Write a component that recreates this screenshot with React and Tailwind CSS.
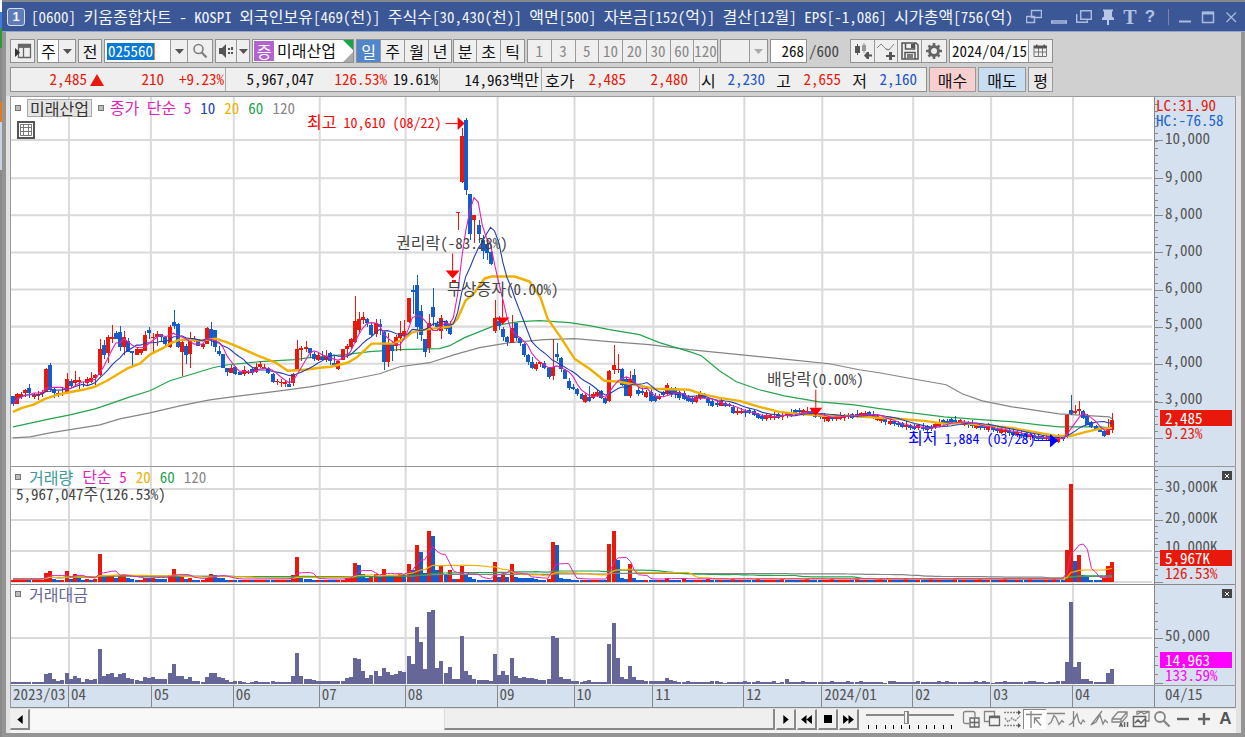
import React from 'react';

/* ---------- price data: [colour, high, body top, body bottom, low] in chart units ---------- */
const HEAD = `b395,395,403,405 r392,393,403,403 r391,393,396,398 r388,389,392,396 b383,387,392,397 r392,394,396,398 r390,393,395,399 r389,391,393,396 r367,368,391,391 b362,364,389,391
b387,388,392,397 r390,392,394,396 r387,392,393,395 r372,378,392,393 b378,380,385,387 r370,379,382,385 r376,379,381,388 b381,383,384,386 r376,378,382,384 r371,377,381,382
r373,374,377,384 r338,348,374,375 b339,344,354,358 r334,336,352,362 r324,336,338,342 b330,332,338,338 b325,331,346,350 r330,336,346,354 b337,340,351,351 b350,350,352,366
r346,348,354,354 r348,348,352,354 r330,334,350,350 b326,329,332,338 r332,336,337,352 r330,333,336,345 b333,333,336,341 b335,336,343,346 r324,326,346,347 b309,321,325,328
b322,323,346,347 r340,341,351,375 b343,345,354,363 r331,338,353,367 r335,338,340,341 b338,338,345,345 r342,343,346,348 r326,327,343,343 b321,328,339,345 b329,329,346,351
b345,350,353,355 b353,353,367,367 b367,367,371,375 r364,367,372,372 b365,366,373,374 b371,371,374,374 r365,369,373,375 r369,371,372,373 b366,368,372,374 r362,366,371,372
r360,363,366,367 r363,366,368,368 b366,367,372,373 b372,373,381,382 r378,380,381,384 r378,381,382,386 r379,381,383,386 b377,383,386,386 r372,373,382,385 r339,348,370,370
r345,347,349,360 r340,346,348,351 b347,347,352,357 b351,353,358,360 r352,354,359,360 b350,356,359,360 r349,355,359,361 b351,352,360,364 b355,362,364,365 r360,360,368,369
r348,348,359,359 r343,345,348,357 r337,338,346,348 r295,320,341,342 r311,318,329,333 r311,316,319,323 b317,318,322,326 b322,324,334,336 r318,322,333,336 b318,323,326,334
b330,331,361,369 r332,343,361,366 b341,343,350,360 r334,336,345,350 r320,332,337,350 r319,330,335,336 r297,297,321,322 b284,289,291,313 b275,284,326,338 b304,310,334,340
b338,338,351,356 r313,322,347,352 b287,306,316,325 b320,323,326,330 r314,317,330,338 b319,320,328,330 b320,323,333,334 r280,280,281,282 r212,212,213,230 r128,136,182,183
b118,120,190,195 b194,194,234,240 r215,215,220,243 b220,225,234,243 b235,240,251,259 b240,244,253,260 b251,252,264,265 r299,317,330,332 b315,320,325,329 b326,328,336,340
b335,336,341,345 r314,327,342,342 b322,322,337,340 b336,337,342,345 b342,343,354,356 b353,354,361,364 b356,361,367,368 r361,363,368,370 r361,361,363,366 b360,362,367,368
b367,367,376,378 r338,366,375,379 b342,353,356,360 b356,357,368,371 b368,369,378,378 b377,380,387,389 b383,386,388,389 b387,388,393,395 b392,393,398,399 r392,394,401,402
b385,396,400,401 r391,393,397,398 r389,391,395,396 b389,390,397,398 b396,397,402,403 r369,370,400,401 r344,364,369,373 r353,368,369,372 b367,368,384,385 b376,378,395,395
r370,378,395,397 b368,374,383,385 b386,389,393,395 b385,390,392,394 r389,391,396,397 b387,391,400,401 b392,395,400,401 r393,395,398,399 b390,391,394,396 r382,384,393,394
b386,388,394,396 b386,387,393,397 b389,391,397,399 b390,392,398,399 b394,396,400,401 b395,397,401,403 r394,396,401,402 r390,392,397,399 b392,393,397,398 b396,397,402,405
b398,400,405,406 b399,402,404,406 r397,400,405,405 b401,402,405,406 b402,403,405,406 b404,406,412,413 r407,410,412,414 r407,410,412,413 b408,410,412,416 b408,409,412,413
b409,410,414,415 b412,413,417,418 b413,415,418,420 r412,414,418,420`;
const TAIL = `b436,438,440,441 r433,435,441,442 b436,436,438,440 r413,414,436,437 b394,409,413,414 r404,410,412,413 r400,408,410,414 b409,410,417,418 b413,415,424,424 b420,421,426,427
b424,425,428,429 b426,427,431,431 b429,430,435,436 r418,427,434,434 r412,419,429,432`;
const parse = (s) => s.trim().split(/\s+/).map((t) => [t[0], ...t.slice(1).split(',').map(Number)]);

/* the quiet stretch between the two listed runs, as [bar, level] */
const DRIFT = [[184, 416], [188, 414], [191, 410], [194, 412], [198, 418], [203, 415], [208, 413], [211, 419], [218, 426], [223, 427], [226, 421], [229, 420], [233, 424], [238, 428], [243, 432], [248, 436], [253, 438]];
const QUIET_COLORS = 'rrbrrbbbrrbbbrrbrrrrbbrrbbrrbrbbbrbbrbbbrrbbbbrrbbrbbrbbrrbbrbbrbbbrb';
const LAST = 267;
const head = parse(HEAD);
const tail = parse(TAIL);
const quiet = [];
for (let i = head.length; i <= LAST - tail.length; i++) {
  let k = 1;
  while (k < DRIFT.length - 1 && i > DRIFT[k][0]) k++;
  const [a, ya] = DRIFT[k - 1];
  const [b, yb] = DRIFT[k];
  const y = Math.round(ya + ((yb - ya) * (i - a)) / (b - a));
  const c = QUIET_COLORS[(i - head.length) % QUIET_COLORS.length];
  const big = i % 3 === 0 ? 1 : 0;
  quiet.push([c, y - 3 - (i % 4 === 1 ? 2 : 0), y - 2 + (i % 2), y + 1 + big, y + 3 + (i % 5 === 2 ? 1 : 0)]);
}
const CANDLES = [...head, ...quiet, ...tail];
const xOf = (i) => 13 + i * 4.12;
const RED = '#e8190b';
const BLUE = '#145bcb';

/* ---------- traded amount and volume, as bar heights ---------- */
const AMOUNT_HEAD = [2, 2, 2, 2, 2, 2, 2, 2, 10, 11, 5, 3, 4, 11, 5, 8, 6, 2, 5, 4, 5, 35, 8, 10, 11, 7, 10, 11, 6, 5, 4, 3, 7, 6, 7, 5, 5, 5, 11, 20, 8, 8, 5, 7, 3, 3, 2, 7, 11, 11, 7, 6, 4, 2, 3, 3, 2, 1, 2, 3, 2, 2, 2, 3, 2, 2, 2, 2, 8, 31, 8, 5, 5, 4, 3, 3, 3, 3, 3, 3, 3, 6, 7, 26, 25, 13, 6, 9, 13, 8, 16, 12, 9, 10, 13, 12, 28, 20, 57, 42, 15, 72, 74, 16, 23, 11, 17, 5, 5, 48, 13, 9, 5, 4, 4, 4, 3, 30, 9, 13, 9, 26, 8, 6, 7, 6, 6, 5, 4, 4, 5, 48, 46, 7, 5, 5, 3, 3, 2, 3, 4, 2, 2, 2, 2, 40, 61, 26, 7, 5, 18, 7, 4, 4, 3, 3, 3, 3, 3, 6, 4, 3];
const AMOUNT_TAIL = [3, 3, 22, 82, 17, 22, 5, 5, 3, 2, 2, 2, 11, 15];
const AMOUNT = CANDLES.map((_, i) => {
  if (i < AMOUNT_HEAD.length) return AMOUNT_HEAD[i];
  if (i >= 254) return AMOUNT_TAIL[i - 254];
  if (i === 188) return 5;
  return i % 7 === 3 || i % 11 === 5 ? 3 : i % 13 === 4 ? 1 : 2;
});
const BIG_VOLUME = { 8: 9, 9: 11, 13: 11, 15: 8, 21: 28, 39: 13, 48: 8, 68: 7, 69: 25, 83: 19, 84: 17, 90: 13, 96: 18, 98: 37, 99: 30, 101: 51, 102: 46, 103: 12, 104: 17, 106: 12, 109: 16, 117: 20, 121: 18, 131: 40, 132: 37, 145: 38, 146: 51, 147: 22, 150: 18, 256: 32, 257: 98, 258: 21, 259: 27, 260: 7, 261: 6, 265: 4, 266: 16, 267: 20 };
const VOLUME = AMOUNT.map((a, i) => {
  if (BIG_VOLUME[i]) return BIG_VOLUME[i];
  if (i > 160) return i % 6 === 1 ? 3 : 2;
  return Math.max(2, Math.round(a * 0.6));
});
/* a volume bar is red when it rose against the bar before it */
const volumeColor = (i) => {
  const change = VOLUME[i] - (VOLUME[i - 1] ?? 0);
  if (change === 0) return CANDLES[i][0] === 'r' ? RED : BLUE;
  return change > 0 ? RED : BLUE;
};

const movingAverage = (values, n) => values.map((_, i) => {
  const part = values.slice(Math.max(0, i - n + 1), i + 1);
  return part.reduce((s, v) => s + v, 0) / part.length;
});
const CLOSES = CANDLES.map(([c, , top, bottom]) => (c === 'r' ? top : bottom));
const toPoints = (ys) => ys.map((y, i) => `${xOf(i).toFixed(1)},${y.toFixed(1)}`).join(' ');
const volLine = (n) => toPoints(movingAverage(VOLUME, n).map((v) => 580 - v));

const MA20 = '13,411 22,407 33,404 45,398 57,394 67,392 83,389 95,386 107,380 117,374 127,368 140,363 150,354 162,348 170,343 180,339 200,340 216,338 228,342 240,347 258,355 276,362 288,370 305,369 320,367 331,366 348,362 358,356 372,343 385,343 394,343 405,338 412,332 425,329 450,326 458,318 466,300 475,292 485,278 492,276 515,276 530,281 541,297 548,318 560,335 575,358 590,368 605,380 620,381 640,385 655,388 690,389 702,393 720,397 740,400 760,406 780,411 800,413 825,415 850,415 880,417 900,418 925,420 947,423 963,422 980,424 1013,427 1040,432 1057,435 1072,435 1087,431 1100,428 1113,427';
const MA60 = '13,426 27,423 50,418 70,414 95,408 110,403 130,396 150,390 170,380 190,374 213,367 228,364 260,361 295,359 310,357 345,354 370,351 400,349 440,348 450,345 465,337 480,331 495,325 520,321 540,320 570,322 590,325 610,329 640,334 660,342 690,351 702,355 720,370 737,381 760,389 785,395 820,401 855,404 882,408 905,411 945,416 985,419 1015,421 1040,424 1060,426 1100,426 1113,427';
const MA120 = '13,437 30,436 50,432 75,428 100,424 120,418 150,412 180,405 210,399 240,395 280,390 310,386 345,380 380,373 400,366 430,362 455,354 480,347 510,342 545,339 575,338 610,341 650,344 690,349 740,354 790,359 830,363 860,369 880,372 913,378 947,384 963,393 983,400 1013,406 1060,413 1110,416 1113,418';

const MONTHS = [69, 151, 234, 320, 406, 498, 575, 654, 745, 823, 914, 992, 1074];
const PRICES = [140, 178, 215, 252, 289, 326, 363, 401, 437];

const FACE = "font-['Noto_Sans_Mono_CJK_KR','Noto_Sans_CJK_KR',monospace]";

/* Hangul is set one step larger than the figures beside it */
function Mixed({ children }) {
  return children.split(/([가-힣]+)/).map((run, i) => (i % 2 ? <span key={i} className="text-[16px]">{run}</span> : run));
}

function Grid({ rows, top, bottom }) {
  return (
    <g stroke="#dadada" strokeWidth="2">
      {MONTHS.map((x) => <line key={x} x1={x} x2={x} y1={top} y2={bottom} />)}
      {rows.map((y) => <line key={y} x1="11" x2="1153" y1={y} y2={y} />)}
    </g>
  );
}

function Ticks({ major, minor }) {
  return (
    <g stroke="#8a8a8a" shapeRendering="crispEdges">
      {major.map((y) => <line key={'a' + y} x1="1155" x2="1163" y1={y + 0.5} y2={y + 0.5} />)}
      {minor.map((y) => <line key={'b' + y} x1="1155" x2="1158" y1={y + 0.5} y2={y + 0.5} />)}
    </g>
  );
}
const steps = (from, to, step) => {
  const out = [];
  for (let y = from; y < to; y += step) out.push(Math.round(y));
  return out;
};

function Label({ className, children }) {
  return <span className={'absolute whitespace-nowrap leading-4 ' + className}><Mixed>{children}</Mixed></span>;
}
function Dot() {
  return <span className="size-[6px] border border-[#777] bg-[#bbb]" />;
}
function CloseBox() {
  return (
    <button aria-label="닫기" className="absolute right-[3px] top-1 flex h-[9px] w-[10px] items-center justify-center bg-[#444]">
      <svg viewBox="0 0 6 6" className="size-[6px]" stroke="#fff"><path d="M1 1l4 4M5 1L1 5" /></svg>
    </button>
  );
}

function PricePane() {
  return (
    <div className="flex min-h-[368px] flex-1 border-b border-[#999]">
      <div className="relative min-w-0 flex-1">
        <svg viewBox="11 97 1144 368" preserveAspectRatio="none" className="block h-full w-full" fill="none">
          <Grid rows={PRICES} top={97} bottom={465} />
          <polyline points={MA120} stroke="#858585" strokeWidth="1.2" />
          <polyline points={MA60} stroke="#24a44c" strokeWidth="1.2" />
          <g shapeRendering="crispEdges">
            {CANDLES.map(([c, hi, top, bottom, lo], i) => {
              const x = Math.round(xOf(i));
              const color = c === 'r' ? RED : BLUE;
              return (
                <g key={i} fill={color}>
                  <rect x={x} y={hi} width="1" height={Math.max(1, lo - hi)} />
                  <rect x={x - 2} y={top} width="4" height={Math.max(1, bottom - top)} />
                </g>
              );
            })}
          </g>
          <polyline points={MA20} stroke="#f0b000" strokeWidth="2.4" strokeLinejoin="round" />
          <polyline points={toPoints(movingAverage(CLOSES, 10))} stroke="#2440b4" strokeWidth="1.1" />
          <polyline points={toPoints(movingAverage(CLOSES, 5))} stroke="#e022b4" strokeWidth="1.1" />
          <g fill="#ff0000" stroke="#ff0000">
            <path d="M446 123.5h12" /><path d="M458 117l7 6.500-7 6.500z" stroke="none" />
            <path d="M453 253v18" /><path d="M446 270h14l-7 8z" stroke="none" />
            <path d="M503 299v18" /><path d="M496 317h14l-7 7z" stroke="none" />
            <path d="M816.500 389v18" /><path d="M810 407h13l-6.500 8z" stroke="none" />
          </g>
          <path d="M1035 439.500h18" stroke="#0000ff" /><path d="M1051 433l8 6.500-8 7z" fill="#0000ff" />
        </svg>
        <div className="absolute left-1 top-[2px] flex items-center gap-[6px] leading-4">
          <Dot />
          <span className="-my-px border border-[#aaa] bg-[#e4e4e4] px-[2px] text-[16px] text-[#333]">미래산업</span>
          <Dot />
          <span className="text-[#e01fc0]"><Mixed>종가 단순 5</Mixed></span>
          <span className="pl-[3px] text-[#2440b4]">10</span>
          <span className="pl-[3px] text-[#f0b000]">20</span>
          <span className="pl-[3px] text-[#24a44c]">60</span>
          <span className="pl-[3px] text-[#888]">120</span>
        </div>
        <button aria-label="표" className="absolute left-[6px] top-6 flex size-[18px] items-center justify-center border-2 border-[#555] bg-white">
          <svg viewBox="0 0 12 12" className="size-3" stroke="#777" fill="none"><path d="M.5.5h11v11H.5zM.5 3.500h11M.5 7.500h11M3.500.5v11M8.500.5v11" /></svg>
        </button>
        <Label className="left-[296px] top-4 text-[14px] text-[#ff0000]">최고 10,610 (08/22)</Label>
        <Label className="left-[385px] top-[137px] text-[#444]">권리락(-83.28%)</Label>
        <Label className="left-[436px] top-[183px] text-[#444]">무상증자(0.00%)</Label>
        <Label className="left-[756px] top-[273px] text-[#444]">배당락(0.00%)</Label>
        <Label className="left-[897px] top-[332px] text-[14px] text-[#0000ff]">최저 1,884 (03/28)</Label>
      </div>
      <div className="relative w-[81px] border-l border-[#888] bg-[#d6e1ef] text-[#555]">
        <svg viewBox="1155 97 80 368" preserveAspectRatio="none" className="block h-full w-full">
          <Ticks major={PRICES} minor={steps(103.500, 464, 7.420)} />
        </svg>
        <Label className="left-px top-0 text-[#e8190b]">LC:31.90</Label>
        <Label className="left-px top-[15px] text-[#1d62d2]">HC:-76.58</Label>
        <Label className="left-[10px] top-[33px]">10,000</Label>
        <Label className="left-[10px] top-[71px]">9,000</Label>
        <Label className="left-[10px] top-[108px]">8,000</Label>
        <Label className="left-[10px] top-[145px]">7,000</Label>
        <Label className="left-[10px] top-[182px]">6,000</Label>
        <Label className="left-[10px] top-[218px]">5,000</Label>
        <Label className="left-[10px] top-[256px]">4,000</Label>
        <Label className="left-[10px] top-[293px]">3,000</Label>
        <Label className="left-[5px] top-[313px] w-[72px] bg-[#e8190b] pl-[5px] text-white">2,485</Label>
        <Label className="left-[10px] top-[328px] text-[#e8190b]">9.23%</Label>
      </div>
    </div>
  );
}

function VolumePane() {
  return (
    <div className="flex h-[118px] shrink-0 border-b border-[#888]">
      <div className="relative min-w-0 flex-1">
        <svg viewBox="11 466 1144 117" preserveAspectRatio="none" className="block h-full w-full" fill="none">
          <Grid rows={[488, 519, 550, 581]} top={466} bottom={583} />
          <g shapeRendering="crispEdges">
            {VOLUME.map((v, i) => (
              <rect key={i} x={Math.round(xOf(i)) - 2} y={581 - v} width="4" height={v} fill={volumeColor(i)} />
            ))}
          </g>
          <polyline points={volLine(120)} stroke="#858585" strokeWidth="1.2" />
          <polyline points={volLine(60)} stroke="#24a44c" strokeWidth="1.2" />
          <polyline points={volLine(20)} stroke="#f0b000" strokeWidth="1.2" />
          <polyline points={volLine(5)} stroke="#e022b4" />
        </svg>
        <div className="absolute left-1 top-px flex items-center gap-[6px] leading-4">
          <Dot />
          <span className="pl-[2px] text-[16px] text-[#3d9a9a]">거래량</span>
          <span className="pl-[3px] text-[#e01fc0]"><Mixed>단순 5</Mixed></span>
          <span className="pl-[3px] text-[#f0b000]">20</span>
          <span className="pl-[3px] text-[#24a44c]">60</span>
          <span className="pl-[3px] text-[#888]">120</span>
        </div>
        <Label className="left-[5px] top-[18px] text-[#444]">5,967,047주(126.53%)</Label>
      </div>
      <div className="relative w-[81px] border-l border-[#888] bg-[#d6e1ef] text-[#555]">
        <svg viewBox="1155 466 80 117" preserveAspectRatio="none" className="block h-full w-full">
          <Ticks major={[488, 519, 550, 581]} minor={steps(469, 580, 6.200)} />
        </svg>
        <CloseBox />
        <Label className="left-[10px] top-[11px]">30,000K</Label>
        <Label className="left-[10px] top-[42px]">20,000K</Label>
        <Label className="left-[10px] top-[71px]">10,000K</Label>
        <Label className="left-[5px] top-[83px] w-[72px] bg-[#e8190b] pl-[5px] text-white">5,967K</Label>
        <Label className="left-[10px] top-[98px] text-[#e8190b]">126.53%</Label>
      </div>
    </div>
  );
}

function AmountPane() {
  return (
    <div className="flex h-[101px] shrink-0 border-b border-[#999]">
      <div className="relative min-w-0 flex-1">
        <svg viewBox="11 584 1144 100" preserveAspectRatio="none" className="block h-full w-full" fill="none">
          <Grid rows={[637]} top={584} bottom={684} />
          <g shapeRendering="crispEdges" fill="#666699">
            {AMOUNT.map((v, i) => (
              <rect key={i} x={Math.round(xOf(i)) - 2} y={683 - v} width="4" height={v} />
            ))}
          </g>
        </svg>
        <div className="absolute left-1 top-px flex items-center gap-[6px] leading-4">
          <Dot />
          <span className="pl-[2px] text-[16px] text-[#666699]">거래대금</span>
        </div>
      </div>
      <div className="relative w-[81px] border-l border-[#888] bg-[#d6e1ef] text-[#555]">
        <svg viewBox="1155 584 80 100" preserveAspectRatio="none" className="block h-full w-full">
          <Ticks major={[637, 682]} minor={[602, 611, 620, 628, 646, 655, 664, 673]} />
        </svg>
        <CloseBox />
        <Label className="left-[10px] top-[42px]">50,000</Label>
        <Label className="left-[5px] top-[67px] w-[72px] bg-[#ff00ff] pl-[5px] text-white">14,963</Label>
        <Label className="left-[10px] top-[82px] text-[#ff00ff]">133.59%</Label>
      </div>
    </div>
  );
}

function DateAxis() {
  const cell = 'min-w-0 whitespace-nowrap border-r border-[#888] pl-[2px]';
  return (
    <div className="flex h-[22px] shrink-0 border-b border-[#888] bg-[#d6e1ef] leading-4 text-[#555]">
      <div className="grid min-w-0 flex-1 grid-cols-[58fr_83fr_82fr_86fr_86fr_92fr_77fr_79fr_91fr_78fr_91fr_78fr_82fr_81fr]">
        {['2023/03', '04', '05', '06', '07', '08', '09', '10', '11', '12', '2024/01', '02', '03'].map((m) => (
          <span key={m} className={cell}>{m}</span>
        ))}
        <span className="pl-[2px]">04</span>
      </div>
      <span className="w-[81px] border-l border-[#888] pl-[10px]">04/15</span>
    </div>
  );
}

/* ---------- title bar ---------- */
function WinButton({ label, className = 'w-6', children }) {
  return (
    <button aria-label={label} className={'flex h-7 items-center justify-center ' + className}>
      <svg viewBox="0 0 16 16" className="size-4" fill="none" stroke="#a9bbe0" strokeWidth="1.500">{children}</svg>
    </button>
  );
}
function TitleBar() {
  return (
    <header className="flex h-[30px] shrink-0 items-center border-b border-[#8fa5cf] bg-[#3b5795] pl-[5px] pr-[2px] text-[#f2f5fb]">
      <span className="flex size-[18px] shrink-0 items-center justify-center rounded-[3px] border border-[#d7e0f2] bg-[#5f7cb8] font-['Liberation_Sans',sans-serif] text-[13px] font-bold leading-none">1</span>
      <h1 className="min-w-0 flex-1 whitespace-nowrap pl-[6px] leading-6">
        <Mixed>[0600] 키움종합차트 - KOSPI 외국인보유[469(천)] 주식수[30,430(천)] 액면[500] 자본금[152(억)] 결산[12월] EPS[-1,086] 시가총액[756(억)</Mixed>
      </h1>
      <div className="flex shrink-0 items-center">
        <WinButton label="창 연결"><path d="M5.500 1.500h10v7h-10zM.5 7.500h8v6h-8z" /></WinButton>
        <WinButton label="접기" className="w-[26px]"><path d="M.7 12h14.600v2H.7z" /></WinButton>
        <WinButton label="창 복사"><path d="M4.700 1.700h10.600v8.600H4.700zM.7 5v8.300h10.600v-2" /></WinButton>
        <WinButton label="고정"><path d="M3 .5h10v1.500l-1 .5v5l2 1.500v2H2V9l2-1.500v-5l-1-.5z" fill="#b9c8e6" stroke="none" /><path d="M8 10v6" strokeWidth="2" stroke="#b9c8e6" /></WinButton>
        <button aria-label="글꼴" className="w-5 font-['Liberation_Serif',serif] text-[20px] font-bold leading-6 text-[#b3c2e2]">T</button>
        <button aria-label="도움말" className="w-5 font-['Liberation_Sans',sans-serif] text-[17px] font-bold leading-6 text-[#b3c2e2]">?</button>
        <span className="ml-[8px] mr-1 h-4 w-px bg-[#8a7fa8]" />
        <WinButton label="최소화" className="w-[24px]"><path d="M2 12.500h12" strokeWidth="2" /></WinButton>
        <WinButton label="최대화" className="w-[22px]"><path d="M2.500 3.500h11v10h-11z" /><path d="M2 4h12" strokeWidth="3" /></WinButton>
        <WinButton label="닫기"><path d="M3.500 3.500l9.500 9.500M13 3.500L3.500 13" strokeWidth="1.200" /></WinButton>
      </div>
    </header>
  );
}

/* ---------- toolbar ---------- */
const FRAME = 'flex h-6 shrink-0 border border-[#909090] divide-x divide-[#999]';
function Tool({ className = 'w-6', children, ...rest }) {
  return <button className={'flex items-center justify-center ' + className} {...rest}>{children}</button>;
}
function Caret({ color = '#555', label, className = 'w-[17px]', ...rest }) {
  return (
    <button aria-label={label} className={'flex items-center justify-center ' + className} {...rest}>
      <svg viewBox="0 0 9 5" className="h-[5px] w-[9px]" fill={color}><path d="M0 0h9L4.500 5z" /></svg>
    </button>
  );
}
function Toolbar() {
  return (
    <div className="flex items-center gap-[2px] text-[#111]">
      <div className={FRAME + ' bg-[#efefef]'}>
        <Tool aria-label="패널 열기" className="w-[23px]">
          <svg viewBox="0 0 18 16" className="h-4 w-[18px]" fill="none" stroke="#666"><path d="M4.500 1.500h12v13h-12zM4.500 4h12M9.500 4v10" strokeWidth="1.300" /><path d="M5 1.500h11v2.500H5z" fill="#666" /><path d="M1 5l5 4.500L1 14z" fill="#333" stroke="none" /></svg>
        </Tool>
      </div>
      <div className={FRAME + ' bg-[#efefef]'}>
        <select aria-label="구분" className="w-[21px] appearance-none bg-white pl-[3px] text-[16px] leading-5"><option>주</option></select>
        <Caret label="구분 열기" className="w-[16px]" />
      </div>
      <div className={FRAME + ' bg-[#efefef]'}><Tool className="w-[22px] text-[16px]">전</Tool></div>
      <div className={FRAME + ' bg-[#efefef]'}>
        <span className="flex w-[66px] items-center bg-white pl-[2px]">
          <input aria-label="종목코드" defaultValue="025560" className="h-[17px] w-[48px] border-r border-[#e09030] bg-[#0a78d6] pl-px text-white outline-none" />
        </span>
        <Caret label="종목 목록" />
        <Tool aria-label="검색" className="w-[24px]">
          <svg viewBox="0 0 16 16" className="size-4" fill="none" stroke="#808080" strokeWidth="1.600"><circle cx="6.500" cy="6" r="4.500" /><path d="M9.800 9.500l4.700 5" strokeWidth="2.200" /></svg>
        </Tool>
      </div>
      <div className={FRAME + ' bg-[#efefef]'}>
        <Tool aria-label="소리" className="w-[21px]">
          <svg viewBox="0 0 16 16" className="size-4" fill="#555"><path d="M1 5h3l4-4v14l-4-4H1zM10 5h2v2h-2zM10 9h2v2h-2zM13 4h2v3h-2zM13 9h2v2h-2z" /></svg>
        </Tool>
        <Caret label="소리 설정" className="w-[12px]" />
      </div>
      <div className="flex h-6 w-[102px] shrink-0 border border-[#909090] bg-white text-[16px]">
        <span className="m-px flex w-5 items-center justify-center bg-[#b263cf] text-white">증</span>
        <span className="flex-1 whitespace-nowrap pl-[2px] leading-[21px]">미래산업</span>
        <svg viewBox="0 0 10 22" className="h-[22px] w-[10px]"><path d="M0 0h10v10z" fill="#17a34a" /><path d="M10 12v10H0z" fill="#aaa" /></svg>
      </div>
      <div className={FRAME + ' bg-[#efefef] text-[16px]'}>
        <Tool className="w-[24px] bg-[#4f86cc] text-white">일</Tool><Tool>주</Tool><Tool>월</Tool><Tool className="w-[22px]">년</Tool>
      </div>
      <div className={FRAME + ' -ml-px bg-[#efefef] text-[16px]'}><Tool className="w-[23px]">분</Tool><Tool>초</Tool><Tool className="w-[23px]">틱</Tool></div>
      <div className={FRAME + ' w-[191px] bg-[#efefef] text-[#888]'}>
        {['1', '3', '5', '10', '20', '30', '60', '120'].map((n) => <Tool key={n} disabled className="flex-1 basis-0">{n}</Tool>)}
      </div>
      <div className={FRAME + ' bg-[#efefef]'}>
        <select aria-label="주기" disabled className="w-[29px] appearance-none bg-[#efefef]"><option></option></select>
        <Caret label="주기 열기" color="#aaa" disabled />
      </div>
      <div className={FRAME + ' bg-white'}><input aria-label="개수" defaultValue="268" className="w-[35px] bg-white pr-[2px] text-right outline-none" /></div>
      <span className="w-[36px] text-[#444]">/600</span>
      <div className={FRAME + ' ml-[3px] bg-[#efefef]'}>
        <Tool aria-label="차트 추가" className="w-[24px]">
          <svg viewBox="0 0 20 20" className="size-5" fill="#555"><path d="M2 5h5v7H2zM4 3h1v11H4z" /><path d="M9 4h4v6H9zM10.500 2h1v10h-1z" fill="#999" /><path d="M14 11h2v2.500h3v2h-3v2.500h-2l-3-3.500z" /></svg>
        </Tool>
        <Tool aria-label="지표 추가" className="w-[23px]">
          <svg viewBox="0 0 20 20" className="size-5" fill="#555"><path d="M1 7l4-4 4.500 4.500L13 9l5-6M7 5l4 4 3-1" fill="none" stroke="#888" /><path d="M13 11h3v3h3v2h-3v3h-3v-3h-3v-2h3z" /></svg>
        </Tool>
        <Tool aria-label="저장">
          <svg viewBox="0 0 18 18" className="size-[18px]" fill="none" stroke="#555" strokeWidth="1.500"><path d="M1 1h14l2 2v14H1zM4.500 1v6h9V1M4 17v-6.500h10V17M6 13h6M6 15h6" /><path d="M10 2h3v4h-3z" fill="#555" stroke="none" /></svg>
        </Tool>
        <Tool aria-label="설정" className="w-[24px]">
          <svg viewBox="0 0 18 18" className="size-[18px]" fill="none" stroke="#666"><circle cx="9" cy="9" r="4.500" strokeWidth="3" /><path d="M9 1v3M9 14v3M1 9h3M14 9h3M3.500 3.500l2 2M12.500 12.500l2 2M14.500 3.500l-2 2M5.500 12.500l-2 2" strokeWidth="2.600" /></svg>
        </Tool>
      </div>
      <div className={FRAME + ' bg-[#efefef]'}>
        <input aria-label="날짜" defaultValue="2024/04/15" className="w-[79px] bg-white pl-[2px] outline-none" />
        <Tool aria-label="달력" className="w-[23px]">
          <svg viewBox="0 0 15 14" className="h-[14px] w-[15px]" fill="none" stroke="#777"><path d="M1 4.500v8h12.500v-8M1 8h12.500M5.500 4v8M9.500 4v8" /><path d="M.5 1.500H3V.5h1.500v1h6v-1H12v1h2V4.500H.5z" fill="#555" stroke="none" /></svg>
        </Tool>
      </div>
    </div>
  );
}

function QuoteRow() {
  const num = 'text-right';
  return (
    <div className="mt-1 flex items-center gap-[2px] text-[#111]">
      <dl className="flex h-[25px] w-[917px] shrink-0 items-center divide-x divide-[#aaa] border border-[#909090] bg-[#efefef] *:h-full *:items-center">
        <div className="flex w-[215px] text-[#e8190b]">
          <dd className={num + ' w-[76px]'}>2,485</dd>
          <dd className="w-[18px] pl-[3px]"><svg viewBox="0 0 14 12" className="h-3 w-[14px]" fill="#e8190b"><path d="M7 0l7 12H0z" /></svg></dd>
          <dd className={num + ' w-[59px]'}>210</dd>
          <dd className={num + ' w-[60px]'}>+9.23%</dd>
        </div>
        <div className="flex w-[214px]">
          <dd className={num + ' w-[88px]'}>5,967,047</dd>
          <dd className={num + ' w-[73px] text-[#e8190b]'}>126.53%</dd>
          <dd className={num + ' w-[51px]'}>19.61%</dd>
        </div>
        <div className="flex w-[102px] justify-end pr-[2px]"><dd className="whitespace-nowrap"><Mixed>14,963백만</Mixed></dd></div>
        <div className="flex w-[158px] pl-[3px]">
          <dt className="w-[30px] whitespace-nowrap text-[16px]">호가</dt>
          <dd className={num + ' w-[51px] text-[#e8190b]'}>2,485</dd>
          <dd className={num + ' w-[62px] text-[#e8190b]'}>2,480</dd>
        </div>
        <div className="flex flex-1 pl-px">
          <dt className="w-[14px] text-[16px]">시</dt><dd className={num + ' w-[50px] text-[#1d55c8]'}>2,230</dd>
          <dt className="w-[26px] text-right text-[16px]">고</dt><dd className={num + ' w-[50px] text-[#e8190b]'}>2,655</dd>
          <dt className="w-[26px] text-right text-[16px]">저</dt><dd className={num + ' w-[50px] text-[#1d55c8]'}>2,160</dd>
        </div>
      </dl>
      <button className="h-[25px] w-[47px] shrink-0 border border-[#999] bg-[#f7cfce] text-[16px] leading-5">매수</button>
      <button className="h-[25px] w-[48px] shrink-0 border border-[#999] bg-[#c8dcf2] text-[16px] leading-5">매도</button>
      <button className="h-[25px] w-[25px] shrink-0 border border-[#999] bg-[#e8e8e8] text-[16px] leading-5">평</button>
    </div>
  );
}

/* ---------- bottom bar ---------- */
const RAISED = 'flex h-[21px] w-5 shrink-0 items-center justify-center border-b-2 border-r-2 border-[#888] border-l border-t border-l-[#eee] border-t-[#eee] bg-[#efefef]';
function Glyph({ label, d, active, children }) {
  return (
    <button aria-label={label} className={'flex h-5 flex-1 items-center justify-center ' + (active ? 'border-l border-t border-[#888] bg-white' : '')}>
      <svg viewBox="0 0 18 18" className="size-[18px]" fill="none" stroke="#858585" strokeWidth="1.300">{d && <path d={d} />}{children}</svg>
    </button>
  );
}
function BottomBar() {
  return (
    <div className="mt-px flex h-[24px] shrink-0 items-start gap-px bg-[#f3f3f3]">
      <button aria-label="왼쪽으로" className={RAISED}><svg viewBox="0 0 6 10" className="h-[9px] w-[6px]"><path d="M6 0v10L0 5z" /></svg></button>
      <div className="flex min-w-0 flex-1">
        <span className="w-[413px] shrink-0 bg-[#f8f8f8]" />
        <span role="scrollbar" aria-controls="chart" aria-valuenow={100} className="h-[21px] flex-1 border-b-2 border-r-2 border-[#888] border-l border-l-[#ddd] bg-[#efefef]" />
      </div>
      <button aria-label="재생" className={RAISED}><svg viewBox="0 0 6 10" className="h-[9px] w-[6px]"><path d="M0 0v10l6-5z" /></svg></button>
      <button aria-label="뒤로" className={RAISED}><svg viewBox="0 0 12 10" className="h-[9px] w-[11px]"><path d="M6 0v10L0 5zM12 0v10L6 5z" /></svg></button>
      <button aria-label="정지" className={RAISED}><span className="size-2 bg-black" /></button>
      <button aria-label="앞으로" className={RAISED}><svg viewBox="0 0 12 10" className="h-[9px] w-[11px]"><path d="M0 0v10l6-5zM6 0v10l6-5z" /></svg></button>
      <div className="ml-[6px] flex w-[88px] shrink-0 flex-col">
        <input type="range" aria-label="확대" defaultValue={46} className="h-4 w-full appearance-none bg-[linear-gradient(#888,#888)] bg-[length:100%_2px] bg-[position:0_5px] bg-no-repeat [&::-webkit-slider-thumb]:h-[13px] [&::-webkit-slider-thumb]:w-[5px] [&::-webkit-slider-thumb]:appearance-none [&::-webkit-slider-thumb]:border [&::-webkit-slider-thumb]:border-r-2 [&::-webkit-slider-thumb]:border-[#888] [&::-webkit-slider-thumb]:bg-[#f3f3f3]" />
        <span className="flex justify-between px-[2px]">
          {Array.from({ length: 11 }, (_, i) => <i key={i} className="h-1 w-px bg-black" />)}
        </span>
      </div>
      <div className="ml-[5px] flex w-[276px] shrink-0">
        <Glyph label="창 추가" d="M13 7V3.500q0-2-2-2H3.500q-2 0-2 2V12q0 1.500 2 1.500H7"><path d="M8 8h9v9H8zM12.500 8v9M8 12.500h9" stroke="#666" /></Glyph>
        <Glyph label="창 겹치기" d="M1.500 1.500h10v10h-10z"><path d="M6.500 6.500h10v9h-10z" fill="#f3f3f3" stroke="#666" /><path d="M6 7h11" strokeWidth="2.500" stroke="#666" /></Glyph>
        <Glyph label="지표 범위"><path d="M0 2.500h15M0 15.500h15" strokeDasharray="2 1" /><path d="M14 0l3 2.500L14 5zM14 13l3 2.500-3 2.500z" fill="#555" stroke="none" /><path d="M1 8l3 4 4-4 3 3 5-5" strokeDasharray="2 1" /></Glyph>
        <Glyph label="십자선" active d="M0 3.500h16M5 0v17M8 6.500l7 8M8 7h6M8.500 6.500v6" />
        <Glyph label="추세선" d="M0 3.500h18M1 14.500l3-2 3-7 2 2 3 7 3-4 2 2" />
        <Glyph label="세로선" d="M5.500 1v16M1 15l3-2 5-9 2 8 2 2 2-4 2 2" />
        <Glyph label="사선" d="M1 15L12 1M1 15l5-3 4-7 3 9 2-4 3 3" />
        <Glyph label="지우개" d="M1 9l6-7h9v4l-5 6H1zM1 9h9l6-7M10 9v3"><path d="M10 13l-1.500 4M10 13l1.500 4M13.500 12v5M16.500 12v5" strokeWidth="1.500" stroke="#666" /></Glyph>
        <Glyph label="차트 복사" d="M5 5V1.500h12V11h-3M6 4l3-2 3 2 4-2"><path d="M1.500 6.500h12v10h-12zM3 13l3-3 3 3 4-4" strokeWidth="1.600" stroke="#666" /></Glyph>
        <Glyph label="돋보기"><circle cx="7" cy="7" r="5" strokeWidth="1.800" /><path d="M10.500 10.500l6 6" strokeWidth="2.400" /></Glyph>
        <Glyph label="축소"><path d="M3 9h12" strokeWidth="2.400" stroke="#666" /></Glyph>
        <Glyph label="확대"><path d="M3 9h12M9 3v12" strokeWidth="2.400" stroke="#666" /></Glyph>
        <button aria-label="자동" className="flex-1 font-['Liberation_Sans',sans-serif] text-[17px] font-bold leading-5 text-[#555]">A</button>
      </div>
    </div>
  );
}

export default function App() {
  return (
    <div className={'flex min-h-screen min-w-[1245px] bg-[#8f8f8f] text-[15px] ' + FACE}>
      <div className="flex w-[2px] shrink-0 flex-col bg-[#8a8a8a]">
        <i className="h-3 bg-white" /><i className="h-4 bg-[#3a7fd9]" /><i className="h-5 bg-[#2c9a3a]" /><i className="h-[54px] bg-[#888]" /><i className="h-5 bg-[#e5791e]" /><i className="h-12 bg-[#c5d3e4]" />
      </div>
      <div className="flex min-w-0 flex-1 flex-col border-t-2 border-[#85878a]">
        <TitleBar />
        <div className="flex flex-1 flex-col border-x-4 border-b-4 border-[#949494] bg-[#e2e2e2]">
          <div className="bg-[#d0d0d0] px-1 pb-1 pt-[7px]">
            <Toolbar />
            <QuoteRow />
          </div>
          <main id="chart" className="mr-[5px] ml-1 flex flex-1 flex-col">
            <div className="flex flex-1 flex-col border-l border-r border-t border-[#999] bg-white">
              <PricePane />
              <VolumePane />
              <AmountPane />
              <DateAxis />
            </div>
            <BottomBar />
          </main>
        </div>
      </div>
    </div>
  );
}
